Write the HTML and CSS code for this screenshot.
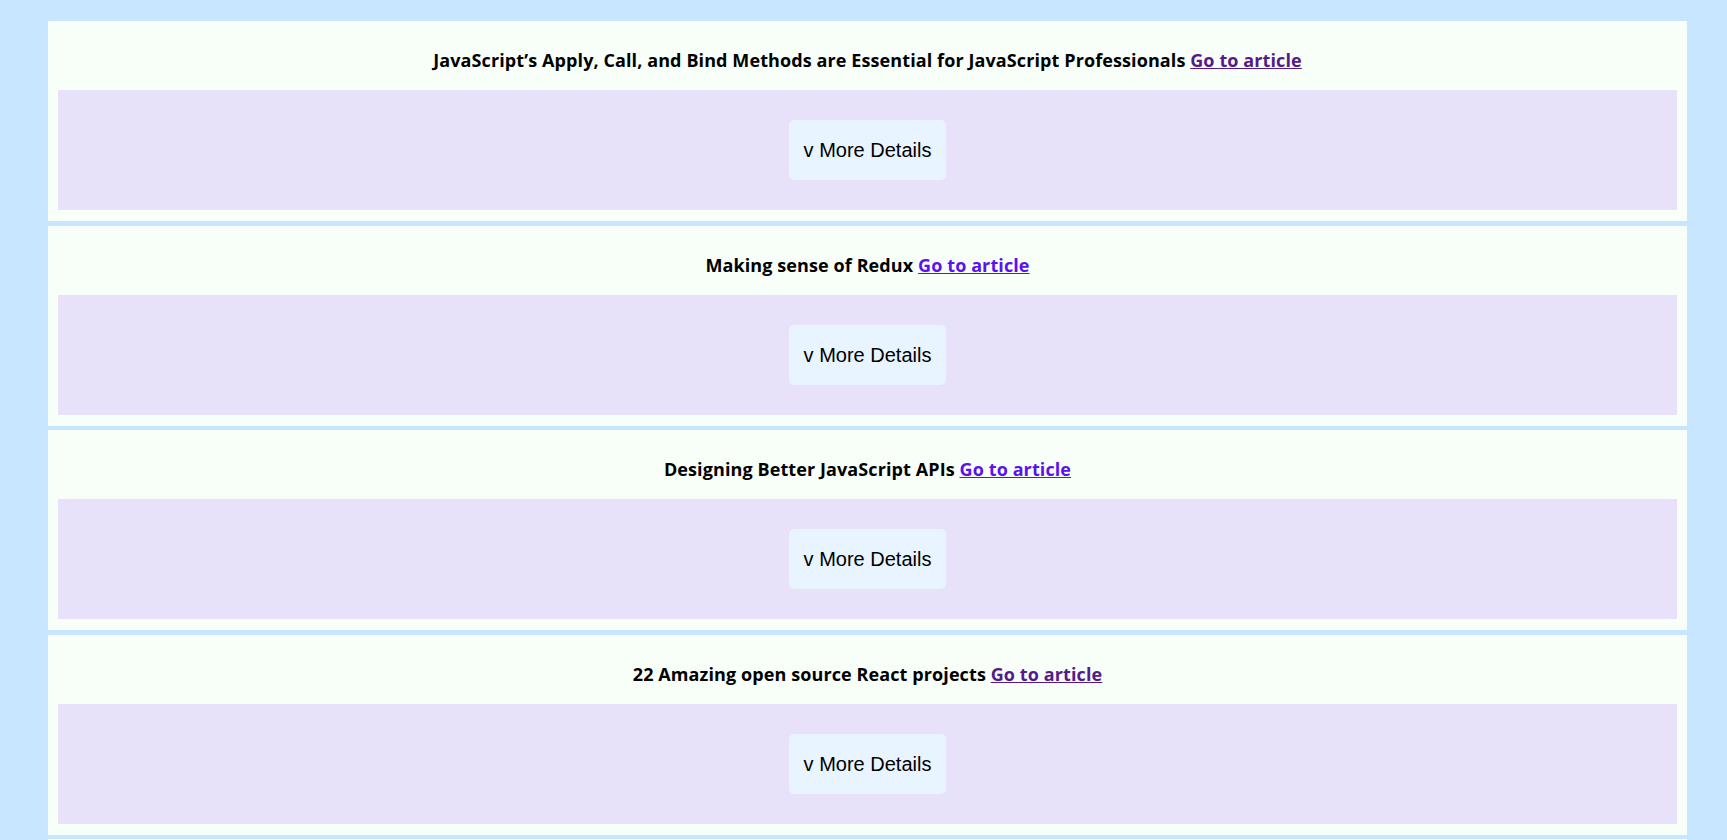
FILE: index.html
```html
<!DOCTYPE html>
<html lang="en">
<head>
<meta charset="utf-8">
<title>Articles</title>
<link rel="stylesheet" href="styles.css">
</head>
<body>
<main class="list">
  <section class="card">
    <h3 class="title">JavaScript’s Apply, Call, and Bind Methods are Essential for JavaScript Professionals <a class="link visited" href="#">Go to article</a></h3>
    <div class="details"><button class="more">v More Details</button></div>
  </section>
  <section class="card">
    <h3 class="title">Making sense of Redux <a class="link" href="#">Go to article</a></h3>
    <div class="details"><button class="more">v More Details</button></div>
  </section>
  <section class="card">
    <h3 class="title">Designing Better JavaScript APIs <a class="link" href="#">Go to article</a></h3>
    <div class="details"><button class="more">v More Details</button></div>
  </section>
  <section class="card">
    <h3 class="title">22 Amazing open source React projects <a class="link visited" href="#">Go to article</a></h3>
    <div class="details"><button class="more">v More Details</button></div>
  </section>
  <section class="card">
    <h3 class="title">Getting started with React Hooks <a class="link" href="#">Go to article</a></h3>
    <div class="details"><button class="more">v More Details</button></div>
  </section>
</main>
</body>
</html>
```

FILE: styles.css
```css
html, body {
  margin: 0;
  padding: 0;
  background: #c8e6ff;
}

.list {
  display: flex;
  flex-direction: column;
  gap: 4.5px;
  padding: 21px 40px 0 48px;
}

.card {
  background: #f8fff9;
  padding: 0 10px 10px;
  height: 200px;
  box-sizing: border-box;
  display: flex;
  flex-direction: column;
}

.title {
  margin: 29px 0 20px;
  font-family: "Open Sans", "Lato", sans-serif;
  font-weight: 700;
  font-size: 18px;
  line-height: 20px;
  letter-spacing: 0.1px;
  text-align: center;
  color: #000;
}

.link {
  color: #5b12ef;
  text-decoration: underline;
}

.link.visited {
  color: #551a8b;
}

.details {
  background: #e8e1fa;
  height: 120px;
  flex: none;
  display: flex;
  align-items: center;
  justify-content: center;
}

.more {
  font-family: "Liberation Sans", Arial, sans-serif;
  font-size: 20px;
  line-height: 24px;
  padding: 18px 15px;
  background: #e8f4ff;
  color: #000;
  border: none;
  border-radius: 5px;
  cursor: pointer;
}
```
